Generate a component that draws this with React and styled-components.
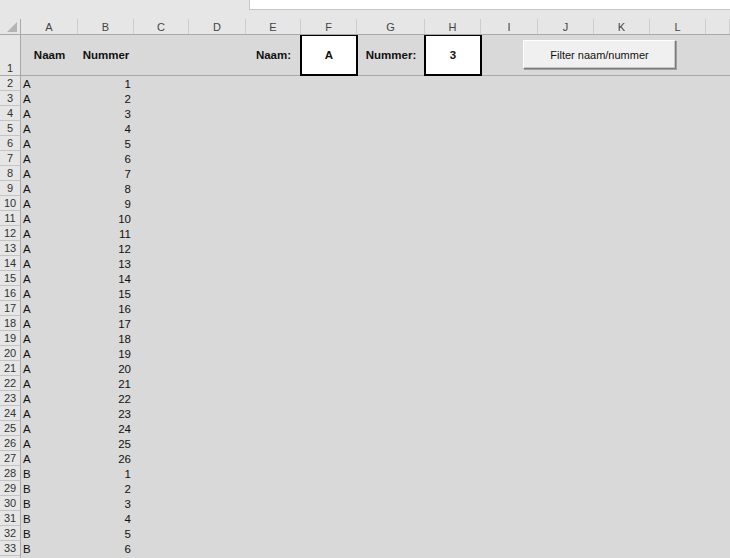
import React from "react";
import styled, { createGlobalStyle } from "styled-components";

const Global = createGlobalStyle`
  html, body { margin: 0; padding: 0; background: #d9d9d9; }
  body { font-family: Arial, "Liberation Sans", sans-serif; overflow: hidden; }
`;

const COLS = "21px 57px 56px 55px 57px 55px 56px 68px 56px 57px 56px 56px 56px 1fr";

const Page = styled.div`
  width: 730px;
  height: 558px;
  display: flex;
  flex-direction: column;
  background: #d9d9d9;
  overflow: hidden;
`;

const TopStrip = styled.div`
  height: 10px;
  display: flex;
  background: #e6e6e6;
  flex-shrink: 0;
`;

const FormulaBox = styled.div`
  margin-left: 249px;
  flex: 1;
  background: #ffffff;
  border-left: 1px solid #c6c6c6;
  border-bottom: 1px solid #c6c6c6;
`;

const Spacer = styled.div`
  height: 9px;
  background: #e6e6e6;
  flex-shrink: 0;
`;

const GridRow = styled.div`
  display: grid;
  grid-template-columns: ${COLS};
  height: ${(p) => p.$h}px;
  flex-shrink: 0;
  box-sizing: border-box;
  border-bottom: ${(p) => (p.$line ? "1px solid #a9a9a9" : "none")};
`;

const ColHeader = styled.div`
  background: #e6e6e6;
  color: #444;
  font-size: 11px;
  display: flex;
  align-items: center;
  justify-content: center;
  border-right: 1px solid #cdcdcd;
  position: relative;
`;

const Corner = styled(ColHeader)`
  border-right: 1px solid #a9a9a9;
  &::after {
    content: "";
    position: absolute;
    right: 3px;
    bottom: 2px;
    width: 0;
    height: 0;
    border-left: 10px solid transparent;
    border-bottom: 10px solid #b4b4b4;
  }
`;

const RowNum = styled.div`
  background: #e6e6e6;
  color: #333;
  font-size: 11px;
  display: flex;
  justify-content: center;
  align-items: ${(p) => (p.$bottom ? "flex-end" : "center")};
  padding-bottom: ${(p) => (p.$bottom ? "1px" : "0")};
  border-right: 1px solid #a9a9a9;
  border-bottom: ${(p) => (p.$sep ? "1px solid #c4c4c4" : "none")};
  box-sizing: border-box;
`;

const Cell = styled.div`
  font-size: 11.5px;
  color: #111;
  display: flex;
  align-items: center;
  justify-content: ${(p) => p.$align || "flex-start"};
  padding: 0 ${(p) => (p.$align === "flex-end" ? "3px" : "2px")};
  font-weight: ${(p) => (p.$bold ? "bold" : "normal")};
  white-space: nowrap;
  box-sizing: border-box;
`;

const InputBox = styled.div`
  background: #ffffff;
  border: 2px solid #000;
  border-top: 1px solid #000;
  margin: 0 -1px -1px -1px;
  display: flex;
  align-items: center;
  justify-content: center;
  font-size: 11.5px;
  font-weight: bold;
  color: #111;
  box-sizing: border-box;
`;

const FilterButton = styled.button`
  grid-column: 10 / 14;
  align-self: center;
  justify-self: start;
  margin-left: 42px;
  margin-top: -1px;
  width: 153px;
  height: 29px;
  background: #f0f0f0;
  border: 1px solid;
  border-color: #ffffff #7a7a7a #7a7a7a #ffffff;
  box-shadow: 1px 1px 0 #a0a0a0, inset -1px -1px 0 #c8c8c8;
  font-family: Arial, "Liberation Sans", sans-serif;
  font-size: 11px;
  color: #111;
  padding: 0;
`;

const letters = ["A", "B", "C", "D", "E", "F", "G", "H", "I", "J", "K", "L", ""];

const data = [];
for (let i = 1; i <= 26; i++) data.push(["A", i]);
for (let i = 1; i <= 6; i++) data.push(["B", i]);

export default function App() {
  return (
    <Page>
      <Global />
      <TopStrip>
        <FormulaBox />
      </TopStrip>
      <Spacer />
      <GridRow $h={16} $line>
        <Corner />
        {letters.map((l, i) => (
          <ColHeader key={i}>{l}</ColHeader>
        ))}
      </GridRow>
      <GridRow $h={41} $line>
        <RowNum $bottom>1</RowNum>
        <Cell $align="center" $bold>Naam</Cell>
        <Cell $align="center" $bold>Nummer</Cell>
        <Cell />
        <Cell />
        <Cell $align="center" $bold>Naam:</Cell>
        <InputBox>A</InputBox>
        <Cell $align="center" $bold>Nummer:</Cell>
        <InputBox>3</InputBox>
        <FilterButton>Filter naam/nummer</FilterButton>
      </GridRow>
      {data.map(([n, v], i) => (
        <GridRow $h={15} key={i}>
          <RowNum $sep>{i + 2}</RowNum>
          <Cell>{n}</Cell>
          <Cell $align="flex-end">{v}</Cell>
        </GridRow>
      ))}
      <GridRow $h={15}>
        <RowNum />
      </GridRow>
    </Page>
  );
}
